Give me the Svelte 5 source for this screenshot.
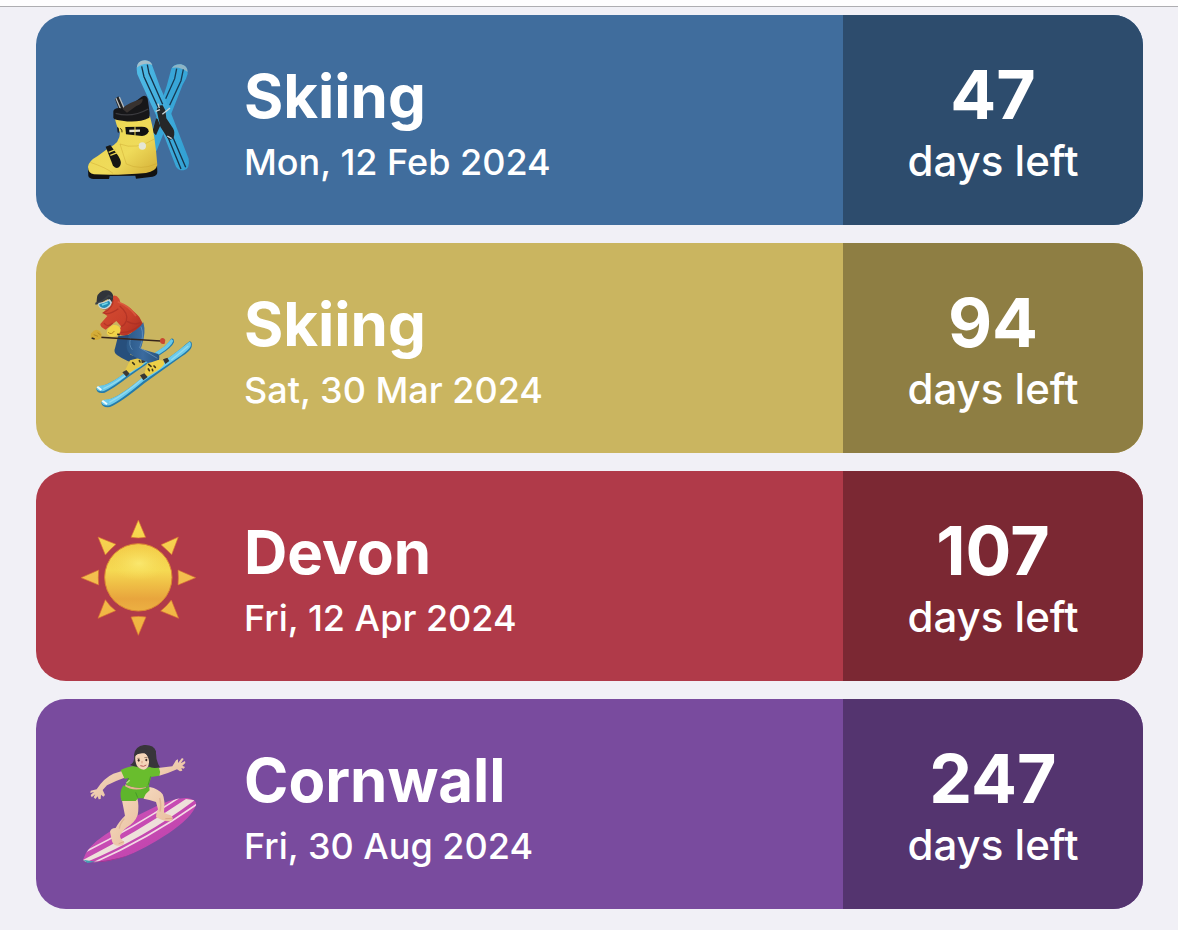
<script lang="ts">
	type Trip = {
		title: string;
		date: string;
		days: number;
		icon: 'boot' | 'skier' | 'sun' | 'surfer';
		color: string;
	};

	const trips: Trip[] = [
		{ title: 'Skiing', date: 'Mon, 12 Feb 2024', days: 47, icon: 'boot', color: 'blue' },
		{ title: 'Skiing', date: 'Sat, 30 Mar 2024', days: 94, icon: 'skier', color: 'gold' },
		{ title: 'Devon', date: 'Fri, 12 Apr 2024', days: 107, icon: 'sun', color: 'red' },
		{ title: 'Cornwall', date: 'Fri, 30 Aug 2024', days: 247, icon: 'surfer', color: 'purple' }
	];
</script>

{#snippet boot()}
	<svg class="icon" viewBox="0 6 372 408" aria-hidden="true">
		<defs>
			<linearGradient id="boot-shell" x1="0" y1="0" x2="1" y2="1">
				<stop offset="0" stop-color="#ecd650" />
				<stop offset="0.6" stop-color="#efdb5a" />
				<stop offset="1" stop-color="#d3ad35" />
			</linearGradient>
			<linearGradient id="boot-ski" x1="0" y1="0" x2="1" y2="0">
				<stop offset="0" stop-color="#50bbe6" />
				<stop offset="1" stop-color="#319fd2" />
			</linearGradient>
		</defs>
		<!-- rear ski -->
		<path d="M286 56 Q294 41 315 43 Q337 48 335 72 Q331 88 320 104 L242 302 Q226 306 214 284 L272 108 Z" fill="#38a6d8" />
		<path d="M288 54 Q296 42 315 43 Q334 47 335 66 Q310 48 288 54Z" fill="#8eb4c5" />
		<path d="M302 56 L296 86 L269 146 M322 58 L315 92 L281 166" stroke="#173b55" stroke-width="4" fill="none" />
		<path d="M240 205 L259 212 L240 256 L229 245 Z" fill="#242424" />
		<!-- front ski -->
		<path d="M182 56 Q183 32 207 31 Q226 32 230 50 L252 110 L276 166 L338 326 Q343 357 323 361 Q307 362 300 350 L243 202 L190 86 Q181 70 182 56Z" fill="url(#boot-ski)" />
		<path d="M182 53 Q184 32 207 31 Q223 32 229 45 Q205 35 182 53Z" fill="#a5bfca" />
		<path d="M197 49 L204 80 L246 172 M214 44 L219 70 L260 163 M273 254 L315 357 M289 258 L329 352" stroke="#16334a" stroke-width="4" fill="none" />
		<path d="M242 181 Q245 163 260 166 L268 181 L271 205 L291 235 Q298 246 293 262 Q286 275 275 265 L253 230 Z" fill="#252728" />
		<path d="M239 184 L252 179 M259 193 L282 174 M246 161 L250 174 M274 258 L287 266" stroke="#c9d3d6" stroke-width="4" />
		<!-- boot -->
		<path d="M117 147 L127 139 L150 184 L133 190Z" fill="#222" />
		<path d="M120 145 L137 185 M130 141 L147 181" stroke="#b6babb" stroke-width="4" />
		<path d="M36 355 L37 378 Q39 386 53 387 L99 387 L101 378 L178 377 L180 386 L230 380 Q244 377 244 366 L243 345Z" fill="#111" />
		<path d="M117 204 Q165 220 222 199 Q237 254 244 345 Q240 364 210 369 Q122 377 54 373 Q36 370 36 350 Q38 333 65 318 L99 293 Q132 280 132 247 Q119 224 117 204Z" fill="url(#boot-shell)" />
		<path d="M132 282 Q180 302 237 266 M132 282 L151 342 Q194 363 242 341 M43 337 Q93 354 111 370" stroke="#c9a22c" stroke-width="3" fill="none" opacity="0.4" />
		<path d="M112 184 Q113 175 130 174 L148 177 L197 140 Q211 133 215 146 L219 174 Q222 188 220 203 Q185 220 139 212 Q116 210 112 204Z" fill="#171719" />
		<path d="M139 176 Q151 159 200 146 Q202 160 181 168 L153 188Z" fill="#38322f" />
		<path d="M119 190 Q168 204 217 177" stroke="#3b3b3f" stroke-width="4" fill="none" />
		<path d="M148 231 L197 230 Q218 230 218 244 Q214 257 198 258 L150 253Z" fill="#111" />
		<path d="M160 243 L192 242" stroke="#e8e4cd" stroke-width="7" />
		<path d="M177 230 L177 257" stroke="#f0dc58" stroke-width="3" />
		<path d="M123 231 Q130 233 129 240 L128 249 L125 247Z" fill="#181714" />
		<path d="M132 235 Q140 238 138 247" stroke="#4a400f" stroke-width="3" fill="none" />
		<circle cx="199" cy="288" r="11" fill="#e5e6d4" />
		<path d="M89 290 L103 285 L127 318 Q139 337 132 348 Q123 360 111 347Z" fill="#171714" />
		<path d="M98 307 L120 298 M103 316 L124 308" stroke="#e8d24e" stroke-width="4" />
	</svg>
{/snippet}

{#snippet skier()}
	<svg class="icon" viewBox="0 0 372 408" aria-hidden="true">
		<defs>
			<linearGradient id="skier-coat" x1="0" y1="0" x2="1" y2="1">
				<stop offset="0" stop-color="#d74f34" />
				<stop offset="0.6" stop-color="#c9402b" />
				<stop offset="1" stop-color="#a82c20" />
			</linearGradient>
			<linearGradient id="skier-leg" x1="0" y1="0" x2="1" y2="0">
				<stop offset="0" stop-color="#2b5988" />
				<stop offset="0.5" stop-color="#3b6b9f" />
				<stop offset="1" stop-color="#28547f" />
			</linearGradient>
		</defs>
		<!-- skis -->
		<path d="M61 326 Q64 317 81 317 Q108 308 139 285 L267 199 Q282 183 285 176 Q295 173 294 187 Q288 202 255 223 L157 291 Q112 326 86 338 Q62 342 61 326Z" fill="#257baa" />
		<path d="M61 324 Q66 316 82 316 Q109 307 139 284 L267 198 Q280 184 286 177 L292 182 Q286 199 255 219 L151 289 Q111 321 84 333 Q64 336 61 324Z" fill="#69c9ea" />
		<path d="M76 368 Q79 359 96 359 Q123 355 190 301 L313 207 Q335 188 341 184 Q350 185 347 200 Q344 212 318 229 L205 310 Q133 369 102 381 Q78 384 76 368Z" fill="#257baa" />
		<path d="M76 366 Q80 358 97 358 Q124 354 190 300 L313 207 Q335 189 340 185 Q347 187 344 199 Q340 208 317 225 L202 304 Q129 365 101 376 Q79 379 76 366Z" fill="#6dcbec" />
		<path d="M82 326 Q118 311 171 270 M100 367 Q147 343 205 292 M286 240 L337 198" stroke="#93daef" stroke-width="4" fill="none" />
		<path d="M64 320 L76 330 M79 362 L93 373" stroke="#f0fafa" stroke-width="6" />
		<!-- rear leg and boot -->
		<path d="M126 169 L163 163 L163 224 L193 233 L184 252 Q151 245 124 226 Q111 218 118 201Z" fill="#274f7c" />
		<path d="M162 241 L192 233 L205 246 Q202 257 179 267 L158 280 L146 274Z" fill="#e6c94a" />
		<path d="M139 277 L151 270 L161 281 L151 290 Z M196 240 L207 235 L209 246 L197 250Z" fill="#3c3934" />
		<!-- front leg and boot -->
		<path d="M159 164 L202 127 Q211 158 197 198 L194 206 L247 222 Q254 231 245 248 L230 250 Q187 241 160 220 Q148 207 153 187Z" fill="url(#skier-leg)" />
		<path d="M195 140 Q206 166 191 203 L244 235 M164 175 Q157 195 169 209" stroke="#6c9ac2" stroke-width="3" fill="none" opacity="0.7" />
		<path d="M213 251 L246 240 Q266 239 265 252 Q257 266 229 281 L211 292 L204 284Z" fill="#edcf48" />
		<path d="M192 286 L205 280 L215 291 L202 301Z M261 238 L274 233 L280 243 L268 252Z" fill="#383733" />
		<path d="M218 253 L225 259 M234 258 L238 262 M217 267 L220 272 M229 268 L230 272 M170 248 L175 253 M190 242 L192 246" stroke="#423819" stroke-width="5" stroke-linecap="round" />
		<!-- jacket -->
		<path d="M80 98 Q107 79 109 49 Q119 42 130 57 L133 67 Q158 77 172 93 Q185 105 190 111 L200 130 Q184 151 154 165 Q138 169 126 161 L135 139 L121 123 L89 149 Q72 141 73 132 L94 108Z" fill="url(#skier-coat)" />
		<path d="M111 59 Q113 83 82 99 Q100 106 127 86 M131 78 Q158 100 151 122 Q145 137 135 139 M153 124 Q175 137 194 128 M84 129 Q94 145 110 129 M135 157 Q167 159 195 133" stroke="#a92f24" stroke-width="4" fill="none" opacity="0.7" />
		<path d="M125 65 Q160 78 180 108" stroke="#ed7755" stroke-width="5" fill="none" opacity="0.4" />
		<!-- pole and gloves -->
		<path d="M60 171 L254 183" stroke="#36251b" stroke-width="5" />
		<path d="M253 177 Q262 170 268 180 L266 191 Q256 195 252 186Z" fill="#c94731" />
		<path d="M46 160 Q58 142 71 154 L77 162 L76 174 Q63 184 49 178 Q41 171 46 160Z" fill="#d4ac37" />
		<path d="M95 146 L111 135 Q130 133 134 149 Q133 162 119 169 Q101 174 92 160Z" fill="#f1d447" />
		<path d="M96 157 Q107 166 115 153 M53 164 L66 169 M65 158 L74 165" stroke="#b58b22" stroke-width="3" fill="none" />
		<path d="M47 174 L56 177 M124 162 L131 165" stroke="#302b20" stroke-width="5" />
		<!-- head -->
		<path d="M73 75 L92 62 L107 75 L93 90 Q79 91 73 82Z" fill="#a86443" />
		<path d="M62 62 Q61 40 80 32 Q105 27 111 45 Q113 62 104 73 L96 57 L61 73Z" fill="#30343a" />
		<path d="M58 71 Q79 68 98 47 L110 53" stroke="#3b4146" stroke-width="6" fill="none" />
		<path d="M67 69 Q86 67 101 57 L108 67 Q104 83 87 88 Q71 87 67 77Z" fill="#c5d5da" />
		<path d="M70 72 Q86 69 99 62 L103 70 Q99 80 85 84 Q72 83 70 76Z" fill="#258eb4" />
		<path d="M78 75 L95 69" stroke="#72d6e8" stroke-width="4" />
	</svg>
{/snippet}

{#snippet sun()}
	<svg class="icon" viewBox="0 -6 372 408" aria-hidden="true">
		<defs>
			<linearGradient id="sun-disc" x1="0" y1="0" x2="0" y2="1">
				<stop offset="0" stop-color="#f3cb48" />
				<stop offset="0.4" stop-color="#f5d952" />
				<stop offset="0.6" stop-color="#efbf46" />
				<stop offset="0.82" stop-color="#e8a53d" />
				<stop offset="1" stop-color="#ecb042" />
			</linearGradient>
			<radialGradient id="sun-glow">
				<stop offset="0" stop-color="#fbec75" stop-opacity="0.8" />
				<stop offset="1" stop-color="#f7df5c" stop-opacity="0" />
			</radialGradient>
			<linearGradient id="sun-rays" gradientUnits="userSpaceOnUse" x1="0" y1="30" x2="0" y2="376">
				<stop offset="0" stop-color="#f8de4f" />
				<stop offset="0.5" stop-color="#f3bd4e" />
				<stop offset="1" stop-color="#f0b33f" />
			</linearGradient>
		</defs>
		<g fill="url(#sun-rays)" stroke="#d96f34" stroke-width="2" stroke-linejoin="round">
			<path d="M187 30 L209 82 Q187 86 165 82Z" />
			<path d="M307 81 L287 134 Q272 119 255 104Z" />
			<path d="M359 203 L306 225 Q308 203 306 180Z" />
			<path d="M308 325 L254 303 Q272 289 286 270Z" />
			<path d="M187 376 L165 321 Q187 317 210 321Z" />
			<path d="M66 325 L88 269 Q101 289 119 302Z" />
			<path d="M15 203 L68 180 Q66 203 68 225Z" />
			<path d="M66 81 L120 103 Q102 118 88 135Z" />
		</g>
		<circle cx="187" cy="202" r="101" fill="url(#sun-disc)" stroke="#dd8733" stroke-width="3" />
		<ellipse cx="189" cy="160" rx="85" ry="52" fill="url(#sun-glow)" />
	</svg>
{/snippet}

{#snippet surfer()}
	<svg class="icon" viewBox="0 3 372 408" aria-hidden="true">
		<defs>
			<linearGradient id="surf-board" x1="0" y1="0" x2="1" y2="1">
				<stop offset="0" stop-color="#d158bc" />
				<stop offset="1" stop-color="#bb3ca8" />
			</linearGradient>
			<linearGradient id="surf-skin" x1="0" y1="0" x2="1" y2="1">
				<stop offset="0" stop-color="#f5d8bd" />
				<stop offset="1" stop-color="#e8bf9f" />
			</linearGradient>
			<clipPath id="surf-clip">
				<path d="M21 374 Q31 337 86 300 Q145 259 218 225 Q288 187 334 189 Q364 194 360 211 Q348 247 279 294 Q203 344 146 365 Q75 388 28 380Z" />
			</clipPath>
		</defs>
		<g clip-path="url(#surf-clip)">
			<rect y="180" width="372" height="220" fill="url(#surf-board)" />
			<path d="M15 378 Q181 293 330 192 L356 196 Q204 310 30 382Z" fill="#eee0da" />
			<path d="M28 350 Q170 280 309 188 M53 383 Q215 312 364 207" stroke="#f3d9e5" stroke-width="5" fill="none" />
			<path d="M22 382 Q142 389 263 311 Q340 263 361 224" stroke="#9a2f8b" stroke-width="4" fill="none" />
		</g>
		<path d="M22 374 L58 380 L34 384Z" fill="#459fb4" />
		<!-- legs -->
		<path d="M137 191 L184 190 Q190 213 185 240 Q177 263 151 278 Q136 291 132 302 Q132 312 145 321 Q145 330 130 332 Q113 334 108 319 L102 290 Q104 280 119 279 Q127 262 147 242Z" fill="url(#surf-skin)" />
		<path d="M203 182 L221 156 Q247 161 260 178 Q268 195 264 231 Q267 237 284 241 Q294 248 288 256 Q280 262 257 254 L240 247 Q239 235 246 223 L240 201 Q219 194 203 191Z" fill="url(#surf-skin)" />
		<path d="M145 251 Q132 265 130 281 M251 189 Q257 210 252 230" stroke="#d29f80" stroke-width="4" fill="none" opacity="0.5" />
		<path d="M128 326 L144 320 M268 251 L288 250" stroke="#d39c7d" stroke-width="2" />
		<!-- arms -->
		<path d="M138 108 L151 126 Q120 137 93 151 L80 165 L87 180 L82 185 L75 179 L74 192 L68 193 L65 184 L58 192 L53 187 L58 178 L47 187 L44 180 L54 171 L43 174 L44 167 L62 163 Q82 130 112 116Z" fill="url(#surf-skin)" />
		<path d="M246 99 L289 94 L300 76 L306 73 L306 84 L318 69 L323 72 L314 85 L327 78 L328 84 L319 92 L327 96 L323 101 L316 99 L319 107 L312 109 L303 103 Q275 116 250 122Z" fill="url(#surf-skin)" />
		<!-- clothes -->
		<path d="M148 148 Q166 161 211 156 L204 164 Q179 172 147 158Z" fill="#e6b38f" />
		<path d="M142 151 Q171 171 208 159 L219 153 L221 166 Q209 174 203 190 L186 190 L179 198 L137 198 Q128 172 142 151Z" fill="#5eb52c" />
		<path d="M134 105 Q161 92 182 93 Q200 108 220 95 L249 98 Q255 110 250 122 L225 126 L218 154 Q185 166 150 149 L158 129 L146 132Z" fill="#69bd2d" />
		<path d="M158 129 L151 145 M224 124 L216 151 M179 172 L185 188" stroke="#459b27" stroke-width="3" fill="none" />
		<path d="M151 145 L161 136" stroke="#b7d98b" stroke-width="4" />
		<!-- head -->
		<path d="M162 90 Q177 83 174 59 Q178 33 204 30 Q233 28 240 49 Q239 77 252 97 Q229 102 217 94 Q206 106 187 97 Q174 94 162 90Z" fill="#38353a" />
		<path d="M179 61 Q185 53 207 53 Q220 66 219 82 Q218 102 204 104 Q188 103 182 91 Q175 73 179 61Z" fill="#f4d4b8" />
		<path d="M173 68 Q180 40 205 40 Q224 52 222 83 Q217 59 205 55 Q184 52 173 68Z" fill="#38353a" />
		<path d="M184 70 L191 70 M205 68 L215 67" stroke="#76594a" stroke-width="2" />
		<ellipse cx="188" cy="76" rx="3" ry="4" fill="#3b2c26" />
		<ellipse cx="211" cy="75" rx="3" ry="4" fill="#3b2c26" />
		<path d="M198 78 L198 85" stroke="#d7a082" stroke-width="3" />
		<path d="M193 92 Q203 97 211 90" stroke="#b7585a" stroke-width="3" fill="none" />
	</svg>
{/snippet}

<header class="topbar"></header>

<main class="trip-list">
	{#each trips as trip}
		<article class="trip {trip.color}">
			<div class="details">
				{#if trip.icon === 'boot'}
					{@render boot()}
				{:else if trip.icon === 'skier'}
					{@render skier()}
				{:else if trip.icon === 'sun'}
					{@render sun()}
				{:else}
					{@render surfer()}
				{/if}
				<div class="text">
					<h2>{trip.title}</h2>
					<p class="date">{trip.date}</p>
				</div>
			</div>
			<div class="countdown">
				<strong>{trip.days}</strong>
				<span>days left</span>
			</div>
		</article>
	{/each}
</main>

<style>
	:global(body) {
		margin: 0;
		background: #f1f0f6;
		font-family: Inter, 'Liberation Sans', sans-serif;
	}

	.topbar {
		height: 6px;
		background: #fefdfe;
		border-bottom: 1px solid #aeadb1;
	}

	.trip-list {
		display: flex;
		flex-direction: column;
		gap: 18px;
		padding: 8px 35px 21px 36px;
	}

	.trip {
		display: flex;
		min-height: 210px;
		border-radius: 30px;
		overflow: hidden;
		color: #fff;
	}

	.details {
		flex: 1;
		display: flex;
		align-items: center;
		gap: 44px;
		padding: 0 40px;
		min-width: 0;
	}

	.icon { flex: none; width: 124px; height: 136px; }

	h2, .date { margin: 0; white-space: nowrap; }
	h2 { font-size: 60px; line-height: 84px; font-weight: 700; }
	.date { font-size: 36px; line-height: 48px; font-weight: 500; }

	.countdown {
		flex: none;
		width: 300px;
		display: flex;
		flex-direction: column;
		align-items: center;
		justify-content: center;
	}

	.countdown strong { font-size: 68px; line-height: 82px; font-weight: 700; }
	.countdown span { font-size: 42px; line-height: 52px; font-weight: 500; }

	.blue { background: #406d9d; }
	.blue .countdown { background: #2d4c6d; }
	.gold { background: #cab560; }
	.gold .countdown { background: #8e7e43; }
	.red { background: #b03a49; }
	.red .countdown { background: #7b2833; }
	.purple { background: #794b9e; }
	.purple .countdown { background: #54346f; }
</style>
